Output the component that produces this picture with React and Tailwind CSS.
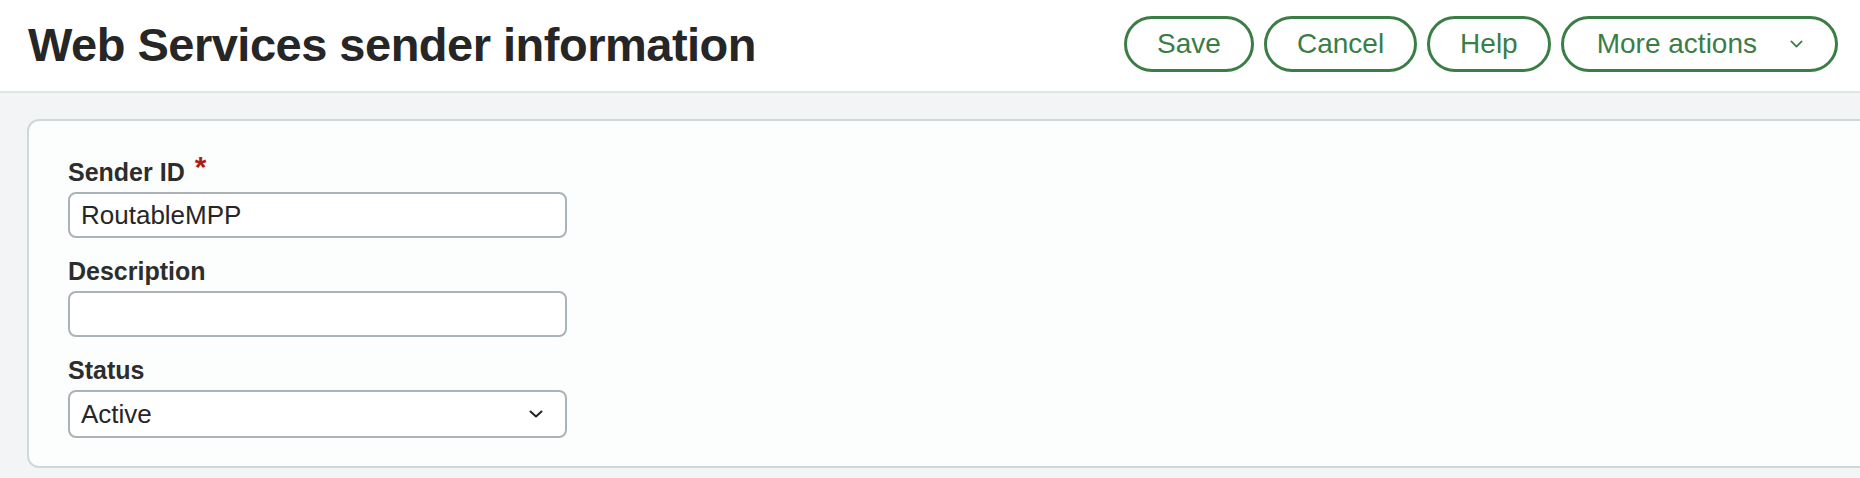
import React from "react";

function Chevron({ className, stroke = "currentColor", width = 14, height = 8, sw = 2 }) {
  return (
    <svg className={className} width={width} height={height} viewBox={`0 0 ${width} ${height}`} fill="none">
      <polyline
        points={`${sw / 2 + 0.5},${sw / 2 + 0.5} ${width / 2},${height - sw / 2 - 0.5} ${width - sw / 2 - 0.5},${sw / 2 + 0.5}`}
        stroke={stroke}
        strokeWidth={sw}
        strokeLinecap="round"
        strokeLinejoin="round"
      />
    </svg>
  );
}

function Btn({ children }) {
  return (
    <button className="h-[56px] border-[3px] border-[#3a7d45] rounded-full px-[30px] text-[28px] text-[#3a7d45] bg-white flex items-center leading-none">
      {children}
    </button>
  );
}

function Field({ label, required, children }) {
  return (
    <div className="flex flex-col">
      <div className="h-[30px] leading-[30px] text-[25px] font-bold text-[#2d2d2d] whitespace-nowrap">
        {label}
        {required && (
          <span className="relative -top-[5px] ml-[10px] align-top inline-block text-[30px] leading-none font-bold text-[#b01c14]">
            *
          </span>
        )}
      </div>
      <div className="mt-[5px]">{children}</div>
    </div>
  );
}

export default function App() {
  return (
    <div className="w-[1860px] h-[478px] overflow-hidden bg-[#f3f4f6] font-['Liberation_Sans',Arial,Helvetica,sans-serif]">
      <header className="h-[93px] bg-white border-b-2 border-[#dfe5e5] flex items-start justify-between pl-[28px] pr-[22px] pt-[16px]">
        <h1 className="text-[47px] leading-[58px] font-bold tracking-[-0.5px] text-[#262626] whitespace-nowrap">
          Web Services sender information
        </h1>
        <div className="flex gap-[10px]">
          <Btn>Save</Btn>
          <Btn>Cancel</Btn>
          <Btn>Help</Btn>
          <button className="h-[56px] border-[3px] border-[#3a7d45] rounded-full pl-[33px] pr-[32px] text-[28px] text-[#3a7d45] bg-white flex items-center gap-[33px] leading-none">
            <span>More actions</span>
            <Chevron width={13} height={8} sw={1.7} />
          </button>
        </div>
      </header>
      <main className="pt-[26px] pl-[27px]">
        <div className="w-[1860px] bg-[#fcfdfd] border-2 border-[#d0d7da] rounded-[12px] pt-[36px] pl-[39px] pb-[28px] flex flex-col gap-[18px]">
          <Field label="Sender ID" required>
            <div className="w-[499px] h-[46px] border-2 border-[#aab3b7] rounded-[8px] bg-white px-[11px] flex items-center text-[26px] text-[#262626]">
              RoutableMPP
            </div>
          </Field>
          <Field label="Description">
            <div className="w-[499px] h-[46px] border-2 border-[#aab3b7] rounded-[8px] bg-white px-[11px] flex items-center text-[26px] text-[#262626]"></div>
          </Field>
          <Field label="Status">
            <div className="w-[499px] h-[48px] border-2 border-[#aab3b7] rounded-[8px] bg-white pl-[11px] pr-[22px] flex items-center justify-between text-[26px] text-[#262626]">
              <span>Active</span>
              <Chevron className="text-[#222]" width={14} height={8} sw={2} />
            </div>
          </Field>
        </div>
      </main>
    </div>
  );
}
